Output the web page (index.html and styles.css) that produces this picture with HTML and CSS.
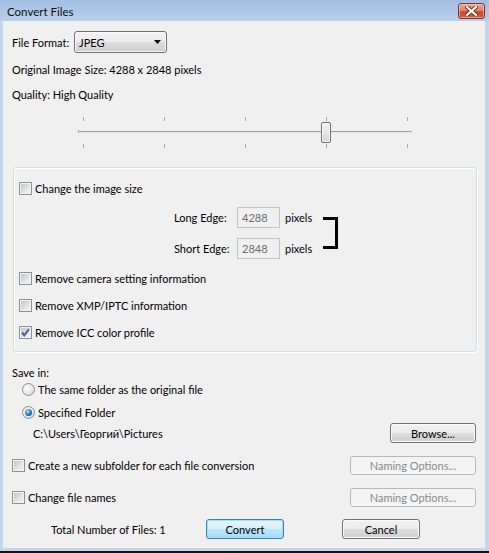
FILE: index.html
```html
<!DOCTYPE html>
<html>
<head>
<meta charset="utf-8">
<link rel="stylesheet" href="styles.css">
</head>
<body>
<div class="window">
  <div class="titlebar">
    <span class="title">Convert Files</span>
    <div class="close">
      <svg width="13" height="10" viewBox="0 0 13 10">
        <path d="M2 1 L11 9 M11 1 L2 9" stroke="#7a2a1a" stroke-width="4" stroke-linecap="square"/>
        <path d="M2 1 L11 9 M11 1 L2 9" stroke="#ffffff" stroke-width="2.2" stroke-linecap="square"/>
      </svg>
    </div>
  </div>
  <div class="client">
    <div class="row format">
      <span class="format-label">File Format:</span>
      <div class="combo">
        <span>JPEG</span>
        <svg width="7" height="4" viewBox="0 0 7 4"><polygon points="0,0 7,0 3.5,4" fill="#000"/></svg>
      </div>
    </div>
    <div class="line info">Original Image Size: 4288 x 2848 pixels</div>
    <div class="line quality">Quality: High Quality</div>
    <div class="slider">
      <svg width="340" height="58" viewBox="0 0 340 58">
        <g stroke="#a8a8a8" stroke-width="1">
          <line x1="8.5" y1="15" x2="8.5" y2="19"/>
          <line x1="89.5" y1="15" x2="89.5" y2="19"/>
          <line x1="170.5" y1="15" x2="170.5" y2="19"/>
          <line x1="251.5" y1="15" x2="251.5" y2="19"/>
          <line x1="332.5" y1="15" x2="332.5" y2="19"/>
          <line x1="8.5" y1="42" x2="8.5" y2="46"/>
          <line x1="89.5" y1="42" x2="89.5" y2="46"/>
          <line x1="170.5" y1="42" x2="170.5" y2="46"/>
          <line x1="251.5" y1="42" x2="251.5" y2="46"/>
          <line x1="332.5" y1="42" x2="332.5" y2="46"/>
        </g>
        <line x1="3" y1="29.5" x2="337" y2="29.5" stroke="#a0a0a0"/>
        <line x1="3" y1="30.5" x2="337" y2="30.5" stroke="#e6e6e6"/>
        <line x1="3.5" y1="28" x2="3.5" y2="31" stroke="#b0b0b0"/>
        <line x1="336.5" y1="28" x2="336.5" y2="31" stroke="#d8d8d8"/>
        <defs>
          <linearGradient id="th" x1="0" y1="0" x2="0" y2="1">
            <stop offset="0" stop-color="#f4f4f4"/>
            <stop offset="1" stop-color="#d6d6d6"/>
          </linearGradient>
        </defs>
        <rect x="246.5" y="20.5" width="9" height="20" rx="1.5" fill="url(#th)" stroke="#707070"/>
        <rect x="247.5" y="21.5" width="7" height="18" rx="1" fill="none" stroke="#fbfbfb" stroke-width="0.8"/>
      </svg>
    </div>

    <div class="group">
      <div class="line">
        <span class="cb"></span><span class="cb-text">Change the image size</span>
      </div>
      <div class="edges">
        <span class="edge-label">Long Edge:</span>
        <div class="tbox">4288</div>
        <span class="px">pixels</span>
        <div class="bracket"></div>
        <span class="edge-label">Short Edge:</span>
        <div class="tbox">2848</div>
        <span class="px">pixels</span>
      </div>
      <div class="line gap11">
        <span class="cb"></span><span class="cb-text">Remove camera setting information</span>
      </div>
      <div class="line gap11">
        <span class="cb"></span><span class="cb-text">Remove XMP/IPTC information</span>
      </div>
      <div class="line gap11">
        <span class="cb checked">
          <svg width="11" height="11" viewBox="0 0 11 11"><path d="M2 5.5 L4.3 8.3 L9 2" fill="none" stroke="#4a5f97" stroke-width="2"/></svg>
        </span><span class="cb-text">Remove ICC color profile</span>
      </div>
    </div>

    <div class="line save-label">Save in:</div>
    <div class="line radio-row r1"><span class="radio"></span><span class="radio-text">The same folder as the original file</span></div>
    <div class="line radio-row r2"><span class="radio on"></span><span class="radio-text">Specified Folder</span></div>
    <div class="row path-row">
      <span class="path">C:\Users\Георгий\Pictures</span>
      <div class="btn browse">Browse...</div>
    </div>
    <div class="row opt-row sub">
      <span class="cb"></span><span class="cb-text">Create a new subfolder for each file conversion</span>
      <div class="btn disabled naming">Naming Options...</div>
    </div>
    <div class="row opt-row names">
      <span class="cb"></span><span class="cb-text">Change file names</span>
      <div class="btn disabled naming">Naming Options...</div>
    </div>
    <div class="actions">
      <span class="total">Total Number of Files: 1</span>
      <div class="btn default">Convert</div>
      <span></span>
      <div class="btn">Cancel</div>
    </div>
  </div>
  <div class="edge-dark"></div>
</div>
</body>
</html>
```
FILE: styles.css
```css
html, body {
  margin: 0;
  padding: 0;
}
body {
  font-family: Lato, "Liberation Sans", sans-serif;
  font-size: 11px;
  color: #000;
  background: #f0f0f0;
}
.window {
  width: 489px;
  height: 553px;
  display: flex;
  flex-direction: column;
  background: #c2d6ee;
  overflow: hidden;
}
.titlebar {
  height: 21px;
  flex: none;
  box-sizing: border-box;
  background: linear-gradient(#a3bee1, #b9d0eb);
  display: flex;
  align-items: center;
  justify-content: space-between;
  padding: 0 4px 0 7px;
}
.title {
  font-size: 11.5px;
  color: #101010;
  margin-top: 1px;
}
.close {
  width: 27px;
  height: 16px;
  box-sizing: border-box;
  border: 1px solid #7e3324;
  border-radius: 3px;
  background: linear-gradient(#eaa99b 0%, #de8672 45%, #c9482c 55%, #d0603f 100%);
  box-shadow: inset 0 0 0 1px rgba(255, 220, 210, 0.5);
  display: flex;
  align-items: center;
  justify-content: center;
  margin-top: 1px;
}
.client {
  flex: none;
  height: 527px;
  margin: 0 4px 0 3px;
  padding: 0 9px;
  box-sizing: border-box;
  background: #f0f0f0;
  display: flex;
  flex-direction: column;
}
.edge-dark {
  height: 2px;
  margin-top: 3px;
  background: #151515;
}
.row {
  display: flex;
  align-items: center;
  white-space: nowrap;
}
.line {
  height: 16px;
  display: flex;
  align-items: center;
  white-space: nowrap;
}
.format {
  margin-top: 10px;
  height: 22px;
}
.format-label {
  width: 62px;
  flex: none;
}
.combo {
  width: 93px;
  height: 22px;
  box-sizing: border-box;
  border: 1px solid #707070;
  border-radius: 3px;
  background: linear-gradient(#f2f2f2 0%, #ebebeb 48%, #dddddd 52%, #cfcfcf 100%);
  box-shadow: inset 0 0 0 1px #fbfbfb;
  display: flex;
  align-items: center;
  justify-content: space-between;
  padding: 0 5px 0 4px;
}
.info { margin-top: 8px; }
.quality { margin-top: 9px; }
.slider {
  height: 58px;
  flex: none;
  padding-left: 63px;
}
.slider svg { display: block; }

.group {
  flex: none;
  margin: 7px 0 0 1px;
  width: 464px;
  height: 185px;
  box-sizing: border-box;
  border: 1px solid #d5dfe5;
  border-radius: 3px;
  box-shadow: inset 1px 1px 0 #ffffff, 1px 1px 0 #ffffff;
  padding: 12px 5px 0;
}
.gap11 { margin-top: 11px; }

.cb {
  flex: none;
  width: 13px;
  height: 13px;
  box-sizing: border-box;
  border: 1px solid #8e8f8f;
  background: linear-gradient(135deg, #b9bdc3 0%, #e4e5e7 60%, #f4f4f4 100%);
  box-shadow: inset 0 0 0 1px #f3f3f3;
  display: flex;
  align-items: center;
  justify-content: center;
}
.cb svg { display: block; }
.cb-text { margin-left: 3px; }

.edges {
  display: grid;
  grid-template-columns: 63px 43px 43px 15px;
  grid-template-rows: 21px 21px;
  row-gap: 10px;
  margin: 11px 0 0 155px;
  align-items: center;
}
.tbox {
  height: 21px;
  box-sizing: border-box;
  border: 1px solid #c5c5c5;
  background: #f0f0f0;
  color: #6d6d6d;
  padding-left: 4px;
  display: flex;
  align-items: center;
}
.px { padding-left: 5px; }
.bracket {
  grid-column: 4;
  grid-row: 1 / 3;
  align-self: start;
  margin-top: 10px;
  height: 32px;
  box-sizing: border-box;
  border: 3px solid #000;
  border-left: none;
}

.save-label { margin-top: 12px; }
.radio-row { padding-left: 10px; }
.r1 { margin-top: 1px; }
.r2 { margin-top: 7px; }
.radio {
  flex: none;
  width: 13px;
  height: 13px;
  box-sizing: border-box;
  border-radius: 50%;
  border: 1px solid #8e8f8f;
  background: radial-gradient(circle at 35% 35%, #ffffff 0%, #e6e7e8 55%, #c9ccd0 100%);
  position: relative;
}
.radio.on::after {
  content: "";
  position: absolute;
  left: 2px;
  top: 2px;
  width: 7px;
  height: 7px;
  border-radius: 50%;
  background: radial-gradient(circle at 40% 35%, #bfe6ff 0%, #3d8fd8 40%, #1a4f9a 75%, #123a72 100%);
}
.radio-text { margin-left: 3px; }

.path-row {
  margin-top: 3px;
  height: 20px;
  justify-content: space-between;
}
.path { margin-left: 21px; }

.btn {
  flex: none;
  box-sizing: border-box;
  height: 20px;
  border: 1px solid #707070;
  border-radius: 3px;
  background: linear-gradient(#f2f2f2 0%, #ebebeb 48%, #dddddd 52%, #cfcfcf 100%);
  box-shadow: inset 0 0 0 1px #fbfbfb;
  display: flex;
  align-items: center;
  justify-content: center;
  white-space: nowrap;
}
.browse { width: 86px; }
.btn.disabled {
  border-color: #b7babc;
  background: #f4f4f4;
  color: #8a8a8a;
  box-shadow: none;
}
.naming {
  width: 126px;
  height: 19px;
  margin-left: auto;
}
.opt-row { height: 19px; margin-top: 13px; }
.names { margin-top: 13px; }
.btn.default {
  border-color: #3c7fb1;
  background: linear-gradient(#eaf6fd 0%, #d9f0fc 48%, #bee6fd 52%, #a7d9f5 100%);
  box-shadow: inset 0 0 0 1px #9de2fd;
}
.actions {
  margin-top: 12px;
  height: 20px;
  display: grid;
  grid-template-columns: 194px 78px 58px 78px;
  align-items: center;
}
.total { padding-left: 39px; white-space: nowrap; }
```
